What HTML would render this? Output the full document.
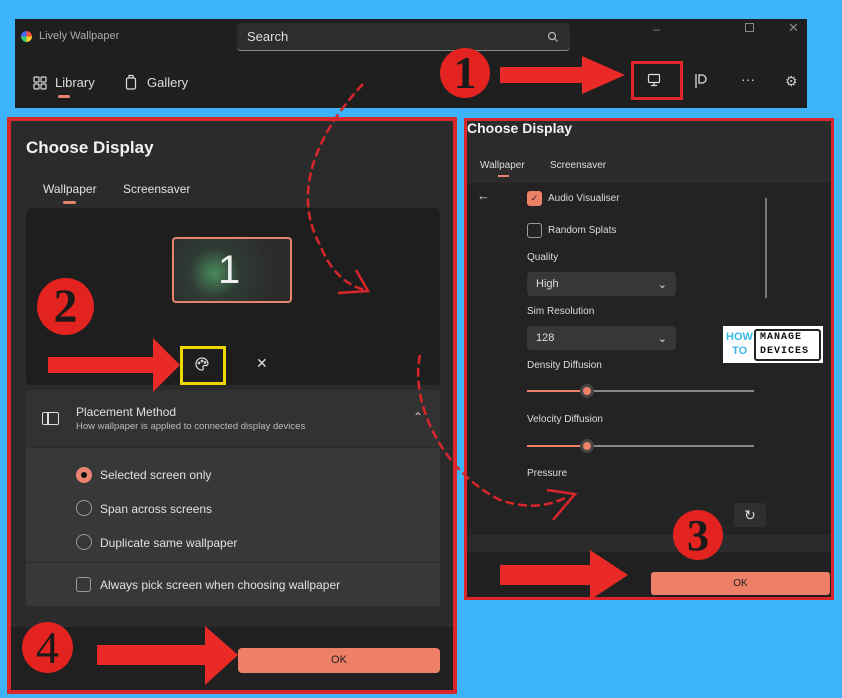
<!DOCTYPE html>
<html><head><meta charset="utf-8"><style>
*{margin:0;padding:0;box-sizing:border-box}
body{width:842px;height:698px;background:#3db3fb;position:relative;overflow:hidden;font-family:"Liberation Sans",sans-serif;color:#e8e8e8}
.a{position:absolute}
.t{font-size:12px;color:#e0e0e0}
.radio{position:absolute;width:16px;height:16px;border-radius:50%;border:1.5px solid #9a9a9a}
.cb{position:absolute;width:15px;height:15px;border-radius:3px;border:1.5px solid #9a9a9a}
.dd{position:absolute;background:#373737;border-radius:4px;font-size:11px;padding:6px 9px;color:#ddd}
.num{position:absolute;border-radius:50%;background:#e2231f;color:#1a1a1a;font-family:"Liberation Serif",serif;font-weight:bold;text-align:center}
</style></head><body>
<div class="a" style="left:15px;top:19px;width:792px;height:89px;background:#1f1f1f"></div>
<div class="a" style="left:21px;top:31px;width:11px;height:11px;border-radius:50%;background:conic-gradient(#e53 0 25%,#fc3 0 50%,#3c6 0 75%,#46f 0)"></div>
<div class="a" style="left:39px;top:30px;font-size:11px;color:#aaa">Lively Wallpaper</div>
<div class="a" style="left:237px;top:23px;width:333px;height:28px;background:#2d2d2d;border-radius:4px;border-bottom:1px solid #888"></div>
<div class="a" style="left:247px;top:29px;font-size:13px;color:#ddd">Search</div>
<svg class="a" style="left:547px;top:31px" width="12" height="12"><circle cx="5" cy="5" r="3.5" fill="none" stroke="#bbb" stroke-width="1.2"/><line x1="7.5" y1="7.5" x2="10.5" y2="10.5" stroke="#bbb" stroke-width="1.2"/></svg>
<div class="a" style="left:653px;top:22px;font-size:12px;color:#888">–</div>
<div class="a" style="left:745px;top:23px;width:9px;height:9px;border:1px solid #888"></div>
<div class="a" style="left:788px;top:20px;font-size:13px;color:#888">✕</div>
<svg class="a" style="left:33px;top:76px" width="14" height="14" fill="none" stroke="#ddd" stroke-width="1.2"><rect x="1" y="1" width="5" height="5" rx="1"/><rect x="8" y="1" width="5" height="5" rx="1"/><rect x="1" y="8" width="5" height="5" rx="1"/><rect x="8" y="8" width="5" height="5" rx="1"/></svg>
<div class="a" style="left:55px;top:75px;font-size:13px;color:#ddd">Library</div>
<div class="a" style="left:58px;top:95px;width:12px;height:3px;border-radius:2px;background:#e8836c"></div>
<svg class="a" style="left:125px;top:74px" width="12" height="16" fill="none" stroke="#ddd" stroke-width="1.2"><rect x="1.5" y="4" width="9" height="11" rx="1.5"/><path d="M4 4V1.5h4V4"/></svg>
<div class="a" style="left:147px;top:75px;font-size:13px;color:#ddd">Gallery</div>
<div class="a" style="left:631px;top:61px;width:52px;height:39px;border:3px solid #e0262a"></div>
<svg class="a" style="left:647px;top:73px" width="14" height="14" fill="none" stroke="#ddd" stroke-width="1.2"><rect x="1.5" y="1.5" width="11" height="8" rx="1"/><path d="M7 9.5v3M4 12.5h6"/></svg>
<svg class="a" style="left:694px;top:73px" width="14" height="16" fill="none" stroke="#ddd" stroke-width="1.3"><path d="M2 1v14M5 2h3a4 4 0 0 1 0 8H5z"/></svg>
<div class="a" style="left:741px;top:71px;font-size:14px;color:#ddd">···</div>
<div class="a" style="left:785px;top:73px;font-size:14px;color:#ccc">⚙</div>

<div class="a" style="left:7px;top:117px;width:450px;height:577px;background:#2b2b2b;border:4px solid #d8262a"></div>
<div class="a" style="left:11px;top:627px;width:442px;height:63px;background:#202020"></div>
<div class="a" style="left:26px;top:138px;font-size:17px;font-weight:bold;color:#f2f2f2">Choose Display</div>
<div class="a t" style="left:43px;top:182px">Wallpaper</div>
<div class="a" style="left:63px;top:201px;width:13px;height:3px;border-radius:2px;background:#e8836c"></div>
<div class="a t" style="left:123px;top:182px">Screensaver</div>
<div class="a" style="left:26px;top:208px;width:414px;height:177px;background:#1e1e1e;border-radius:5px"></div>
<div class="a" style="left:172px;top:237px;width:120px;height:66px;border:2px solid #e8836c;border-radius:4px;background:radial-gradient(circle at 35% 55%,#4a8a5a 0,#2f3b35 30%,#2c2c2c 70%)"></div>
<div class="a" style="left:218px;top:248px;font-size:40px;color:#eee">1</div>
<div class="a" style="left:180px;top:346px;width:46px;height:39px;border:3px solid #ecd700"></div>
<svg class="a" style="left:194px;top:356px" width="16" height="16" fill="none" stroke="#ddd" stroke-width="1.2"><path d="M8 2a6 6 0 1 0 0 12c1.5 0 1.5-1.5 1-2.5s0-2 1.5-2H12a2 2 0 0 0 2-2A6 6 0 0 0 8 2z"/><circle cx="5" cy="7" r=".8"/><circle cx="8" cy="5" r=".8"/><circle cx="11" cy="6.5" r=".8"/></svg>
<div class="a" style="left:256px;top:355px;font-size:14px;color:#ddd">✕</div>
<div class="a" style="left:26px;top:390px;width:414px;height:57px;background:#323232"></div>
<div class="a" style="left:42px;top:412px;width:17px;height:13px;border:1.5px solid #ddd;border-radius:2px"></div>
<div class="a" style="left:47px;top:412px;width:1.5px;height:13px;background:#ddd"></div>
<div class="a t" style="left:76px;top:405px">Placement Method</div>
<div class="a" style="left:76px;top:421px;font-size:9.5px;color:#bbb">How wallpaper is applied to connected display devices</div>
<div class="a" style="left:413px;top:410px;font-size:12px;color:#ccc">⌃</div>
<div class="a" style="left:26px;top:448px;width:414px;height:114px;background:#383838"></div>
<div class="a" style="left:26px;top:563px;width:414px;height:43px;background:#383838"></div>
<div class="radio" style="left:76px;top:467px;border:5px solid #e8836c;background:#111"></div>
<div class="a t" style="left:100px;top:468px">Selected screen only</div>
<div class="radio" style="left:76px;top:500px"></div>
<div class="a t" style="left:100px;top:502px">Span across screens</div>
<div class="radio" style="left:76px;top:534px"></div>
<div class="a t" style="left:100px;top:536px">Duplicate same wallpaper</div>
<div class="cb" style="left:76px;top:577px"></div>
<div class="a t" style="left:100px;top:578px">Always pick screen when choosing wallpaper</div>
<div class="a" style="left:238px;top:648px;width:202px;height:25px;background:#ef8068;border-radius:4px;font-size:11px;color:#222;text-align:center;line-height:25px">OK</div>

<div class="a" style="left:464px;top:118px;width:370px;height:482px;background:#2b2b2b;border:3px solid #d8262a"></div>
<div class="a" style="left:467px;top:183px;width:364px;height:352px;background:#232323"></div>
<div class="a" style="left:467px;top:552px;width:364px;height:45px;background:#202020"></div>
<div class="a" style="left:467px;top:120px;font-size:14px;font-weight:bold;color:#f2f2f2">Choose Display</div>
<div class="a" style="left:480px;top:160px;font-size:10px;color:#ddd">Wallpaper</div>
<div class="a" style="left:498px;top:175px;width:11px;height:2px;background:#e8836c"></div>
<div class="a" style="left:550px;top:160px;font-size:10px;color:#ddd">Screensaver</div>
<div class="a" style="left:477px;top:188px;font-size:13px;color:#ddd">←</div>
<div class="cb" style="left:527px;top:191px;background:#ef8068;border-color:#ef8068;font-size:9px;color:#222;line-height:12px;text-align:center">✓</div>
<div class="a" style="left:548px;top:193px;font-size:10px;color:#ddd">Audio Visualiser</div>
<div class="cb" style="left:527px;top:223px"></div>
<div class="a" style="left:548px;top:225px;font-size:10px;color:#ddd">Random Splats</div>
<div class="a" style="left:527px;top:252px;font-size:10px;color:#ddd">Quality</div>
<div class="dd" style="left:527px;top:272px;width:149px;height:24px">High<span style="float:right">⌄</span></div>
<div class="a" style="left:527px;top:306px;font-size:10px;color:#ddd">Sim Resolution</div>
<div class="dd" style="left:527px;top:326px;width:149px;height:24px">128<span style="float:right">⌄</span></div>
<div class="a" style="left:765px;top:198px;width:2px;height:100px;background:#777"></div>
<div class="a" style="left:723px;top:326px;width:100px;height:37px;background:#fff"></div>
<div class="a" style="left:726px;top:330px;font-size:11px;font-weight:bold;color:#3ab9e8;line-height:14px">HOW<br>&nbsp;&nbsp;TO</div>
<div class="a" style="left:754px;top:329px;width:67px;height:32px;border:2px solid #222;border-radius:3px;font-family:'Liberation Mono',monospace;font-size:10px;font-weight:bold;color:#111;line-height:14px;padding-left:4px;letter-spacing:1px">MANAGE<br>DEVICES</div>
<div class="a" style="left:527px;top:360px;font-size:10px;color:#ddd">Density Diffusion</div>
<div class="a" style="left:527px;top:390px;width:227px;height:2px;background:#888"></div>
<div class="a" style="left:527px;top:390px;width:60px;height:2px;background:#ef8068"></div>
<div class="a" style="left:580px;top:384px;width:14px;height:14px;border-radius:50%;background:#ef8068;border:3px solid #444"></div>
<div class="a" style="left:527px;top:414px;font-size:10px;color:#ddd">Velocity Diffusion</div>
<div class="a" style="left:527px;top:445px;width:227px;height:2px;background:#888"></div>
<div class="a" style="left:527px;top:445px;width:60px;height:2px;background:#ef8068"></div>
<div class="a" style="left:580px;top:439px;width:14px;height:14px;border-radius:50%;background:#ef8068;border:3px solid #444"></div>
<div class="a" style="left:527px;top:468px;font-size:10px;color:#ddd">Pressure</div>
<div class="a" style="left:734px;top:503px;width:32px;height:24px;background:#2f2f2f;border-radius:3px;font-size:14px;text-align:center;line-height:24px;color:#ddd">↻</div>
<div class="a" style="left:651px;top:572px;width:179px;height:23px;background:#ef8068;border-radius:3px;font-size:10px;color:#222;text-align:center;line-height:23px">OK</div>

<svg class="a" style="left:0;top:0" width="842" height="698">
<g fill="#e92a26">
<polygon points="500,67 582,67 582,56 625,75 582,94 582,83 500,83"/>
<polygon points="48,357 153,357 153,338 180,365 153,392 153,373 48,373"/>
<polygon points="500,565 590,565 590,550 628,575 590,600 590,585 500,585"/>
<polygon points="97,645 205,645 205,626 238,655 205,685 205,665 97,665"/>
</g>
<g fill="none" stroke="#d8262a" stroke-width="2.5" stroke-dasharray="9 4">
<path d="M363,84 C320,130 290,190 320,245 C330,270 345,285 365,290"/>
<path d="M420,355 C410,400 440,470 500,500 C530,510 550,505 565,498"/>
</g>
<g fill="none" stroke="#d8262a" stroke-width="2.5">
<path d="M338,293 L368,291 L356,270"/>
<path d="M547,490 L575,494 L553,520"/>
</g>
</svg>
<div class="num" style="left:440px;top:48px;width:50px;height:50px;font-size:46px;line-height:50px">1</div>
<div class="num" style="left:37px;top:278px;width:57px;height:57px;font-size:48px;line-height:58px">2</div>
<div class="num" style="left:673px;top:510px;width:50px;height:50px;font-size:44px;line-height:52px">3</div>
<div class="num" style="left:22px;top:622px;width:51px;height:51px;font-size:46px;line-height:52px;font-weight:normal">4</div>
</body></html>
